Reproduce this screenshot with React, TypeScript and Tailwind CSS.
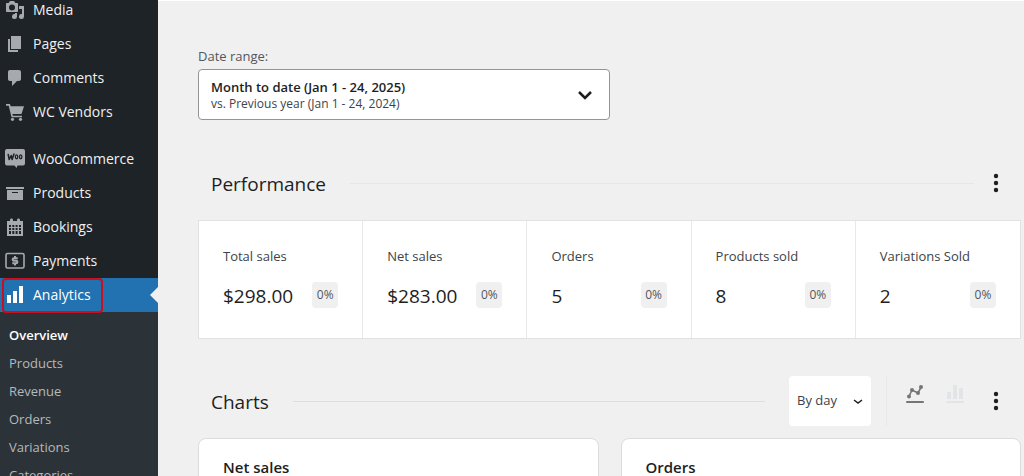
import type { ReactNode } from 'react';

interface MenuItem {
  label: string;
  icon: ReactNode;
  active?: boolean;
}

const contentMenu: MenuItem[] = [
  {
    label: 'Media',
    icon: (
      <path
        fillRule="evenodd"
        d="M13 11V4c0-.55-.45-1-1-1h-1.67L9 1H5L3.67 3H2c-.55 0-1 .45-1 1v7c0 .55.45 1 1 1h10c.55 0 1-.45 1-1zM7 4.5a3 3 0 1 1 0 6 3 3 0 0 1 0-6zm7 1.5h5v10.5a2.500 2.500 0 1 1-2-2.450V9h-3zm-4 8.050V13h2v3.500a2.500 2.500 0 1 1-2-2.450z"
      />
    ),
  },
  {
    label: 'Pages',
    icon: <path d="M6 15V2h10v13H6zm-1 1h8v2H3V5h2v11z" />,
  },
  {
    label: 'Comments',
    icon: <path d="M5 2h9c1.100 0 2 .9 2 2v7c0 1.100-.9 2-2 2h-2l-5 5v-5H5c-1.100 0-2-.9-2-2V4c0-1.100.9-2 2-2z" />,
  },
  {
    label: 'WC Vendors',
    icon: (
      <>
        <path d="M1 2h4l.6 2.200H19l-2.500 7.800H7.400l.5 1.700H17v1.600H6.500L3.700 3.700H1z" />
        <circle cx="7.500" cy="17.300" r="1.600" />
        <circle cx="15.500" cy="17.300" r="1.600" />
      </>
    ),
  },
];

const storeMenu: MenuItem[] = [
  {
    label: 'WooCommerce',
    icon: (
      <>
        <path d="M2 0h16a2 2 0 0 1 2 2v12.500a2 2 0 0 1-2 2h-5.500l-1 2.500-2-2.500H2a2 2 0 0 1-2-2V2a2 2 0 0 1 2-2z" />
        <path
          d="M3.200 5.500l1 5L6.200 6.500l.9 4L9 5"
          fill="none"
          stroke="#1d2327"
          strokeWidth="1.500"
          strokeLinecap="round"
          strokeLinejoin="round"
        />
        <ellipse cx="11.600" cy="7.800" rx="1.200" ry="2" fill="none" stroke="#1d2327" strokeWidth="1.300" />
        <ellipse cx="15.700" cy="7.800" rx="1.200" ry="2" fill="none" stroke="#1d2327" strokeWidth="1.300" />
      </>
    ),
  },
  {
    label: 'Products',
    icon: <path fillRule="evenodd" d="M19 4v2H1V4h18zM2 7h16v10H2V7zm11 3V9H7v1h6z" />,
  },
  {
    label: 'Bookings',
    icon: (
      <path
        fillRule="evenodd"
        d="M15 4h3v15H2V4h3V3c0-.8.600-1.500 1.500-1.500S8 2.200 8 3v1h4V3c0-.8.600-1.500 1.500-1.500S15 2.200 15 3v1zM4 8v2h2V8H4zm3.300 0v2h2V8h-2zm3.300 0v2h2V8h-2zM14 8v2h2V8h-2zM4 11v2h2v-2H4zm3.300 0v2h2v-2h-2zm3.300 0v2h2v-2h-2zm3.400 0v2h2v-2h-2zM4 14v3h2v-3H4zm3.300 0v3h2v-3h-2zm3.300 0v3h2v-3h-2zm3.400 0v3h2v-3h-2z"
      />
    ),
  },
  {
    label: 'Payments',
    icon: (
      <>
        <rect x="1" y="2.500" width="18" height="14.500" rx="1.500" fill="none" stroke="currentColor" strokeWidth="1.600" />
        <path
          d="M12.700 7.200H8.900a1.200 1.200 0 0 0 0 2.500h2.200a1.200 1.200 0 0 1 0 2.600H7.300M10 5v2M10 12.500v2"
          fill="none"
          stroke="currentColor"
          strokeWidth="2"
        />
      </>
    ),
  },
  {
    label: 'Analytics',
    active: true,
    icon: <path d="M2 10h4v8H2zM8 6h4v12H8zM14 1h4v17h-4z" />,
  },
];

const subMenu = ['Overview', 'Products', 'Revenue', 'Orders', 'Variations', 'Categories'];

const stats = [
  { label: 'Total sales', value: '$298.00', delta: '0%' },
  { label: 'Net sales', value: '$283.00', delta: '0%' },
  { label: 'Orders', value: '5', delta: '0%' },
  { label: 'Products sold', value: '8', delta: '0%' },
  { label: 'Variations Sold', value: '2', delta: '0%' },
];

function MenuLink({ item }: { item: MenuItem }) {
  return (
    <li className="relative">
      <a
        href="#"
        className={`flex h-[34px] items-center gap-2 pl-[5px] text-sm ${
          item.active ? 'bg-[#2271b1] text-white' : 'text-[#f0f0f1]'
        }`}
      >
        <svg
          viewBox="0 0 20 20"
          className={`size-5 shrink-0 ${item.active ? 'text-white' : 'text-[#a7aaad]'}`}
          fill="currentColor"
        >
          {item.icon}
        </svg>
        {item.label}
      </a>
      {item.active && (
        <>
          <span className="absolute top-0 left-[2px] h-[35px] w-[101px] rounded border-2 border-[#c9101c]" />
          <span className="absolute top-[9px] right-0 border-y-8 border-r-8 border-y-transparent border-r-[#f0f0f0]" />
        </>
      )}
    </li>
  );
}

function Sidebar() {
  return (
    <nav className="w-[158px] shrink-0 bg-[#1d2327]">
      <ul className="-mt-[7px]">
        {contentMenu.map(item => (
          <MenuLink key={item.label} item={item} />
        ))}
      </ul>
      <ul className="mt-[13px]">
        {storeMenu.map(item => (
          <MenuLink key={item.label} item={item} />
        ))}
      </ul>
      <ul className="bg-[#2c3338] pt-[10px] pb-2 text-[13px]">
        {subMenu.map((label, i) => (
          <li key={label}>
            <a
              href="#"
              className={`flex h-7 items-center pl-[9px] ${i === 0 ? 'font-semibold text-white' : 'text-[#b4b9be]'}`}
            >
              {label}
            </a>
          </li>
        ))}
      </ul>
    </nav>
  );
}

function MoreButton({ label }: { label: string }) {
  return (
    <button type="button" aria-label={label} className="flex h-6 w-6 items-center justify-center text-[#1e1e1e]">
      <svg viewBox="0 0 24 24" className="size-6" fill="currentColor">
        <circle cx="12" cy="5" r="2.200" />
        <circle cx="12" cy="12" r="2.200" />
        <circle cx="12" cy="19" r="2.200" />
      </svg>
    </button>
  );
}

function DateRange() {
  return (
    <div className="w-[412px]">
      <label htmlFor="date-range" className="block text-[13px] leading-5 text-[#50575e]">
        Date range:
      </label>
      <button
        id="date-range"
        type="button"
        className="mt-[3px] flex h-[51px] w-full items-center justify-between rounded border border-[#949494] bg-white pr-3 pl-3 text-left"
      >
        <span>
          <span className="block text-[13px] leading-[18px] font-semibold text-[#1e1e1e]">
            Month to date (Jan 1 - 24, 2025)
          </span>
          <span className="block text-xs leading-4 text-[#3c434a]">vs. Previous year (Jan 1 - 24, 2024)</span>
        </span>
        <svg viewBox="0 0 24 24" className="size-6" fill="none" stroke="#1e1e1e" strokeWidth="2.500">
          <path d="M6 9l6 6 6-6" />
        </svg>
      </button>
    </div>
  );
}

function Performance() {
  return (
    <section>
      <div className="flex h-[50px] items-center px-[13px]">
        <h2 className="pt-[2px] text-[19px] text-[#1e1e1e]">Performance</h2>
        <hr className="mr-[10px] ml-6 grow border-[#e6e6e6]" />
        <MoreButton label="Performance options" />
      </div>
      <ul className="mt-3 grid grid-cols-5 divide-x divide-[#e8e8e8] border border-[#e2e2e2] bg-white">
        {stats.map(s => (
          <li key={s.label} className="px-6 pt-[25px] pb-[30px]">
            <p className="text-[13px] leading-5 whitespace-nowrap text-[#3c434a]">{s.label}</p>
            <div className="mt-4 flex items-center justify-between">
              <span className="pt-[2px] text-[19px] leading-6 text-[#1e1e1e]">{s.value}</span>
              <span className="flex h-[26px] w-[26px] items-center justify-center rounded-sm bg-[#f0f0f0] text-xs text-[#50575e]">
                {s.delta}
              </span>
            </div>
          </li>
        ))}
      </ul>
    </section>
  );
}

function Charts() {
  return (
    <section>
      <div className="flex h-[50px] items-center px-[13px]">
        <h2 className="pt-[2px] text-[19px] text-[#1e1e1e]">Charts</h2>
        <hr className="mx-6 grow border-[#dedede]" />
        <div className="relative">
          <select
            aria-label="Interval"
            className="h-[50px] w-[82px] appearance-none rounded-sm bg-white pl-2 text-[13px] text-[#3c434a]"
          >
            <option>By day</option>
            <option>By week</option>
          </select>
          <svg
            viewBox="0 0 10 10"
            className="pointer-events-none absolute top-5 right-2 size-[10px]"
            fill="none"
            stroke="#1e1e1e"
            strokeWidth="1.500"
          >
            <path d="M1 4l4 3 4-3" />
          </svg>
        </div>
        <div className="ml-[15px] flex h-[50px] gap-5 border-l border-[#e8e8e8] pt-2 pr-[19px] pl-[18px]">
          <button type="button" aria-label="Line chart" className="size-5 text-[#757575]">
            <svg viewBox="0 0 20 20" className="size-5" fill="currentColor">
              <path d="M4 12.500L7 6l6 3 3.500-6.500" fill="none" stroke="currentColor" strokeWidth="1.600" />
              <circle cx="4" cy="12.500" r="2" />
              <circle cx="7" cy="6" r="2" />
              <circle cx="13" cy="9" r="2" />
              <circle cx="16" cy="3" r="2" />
              <rect x="1" y="17" width="18" height="2" rx="1" />
            </svg>
          </button>
          <button type="button" aria-label="Bar chart" className="size-5 text-[#e2e4e7]">
            <svg viewBox="0 0 20 20" className="size-5" fill="currentColor">
              <rect x="2" y="8" width="4" height="7" />
              <rect x="8" y="1" width="4" height="14" />
              <rect x="14" y="4" width="4" height="11" />
              <rect x="1" y="17" width="18" height="2" rx="1" />
            </svg>
          </button>
        </div>
        <MoreButton label="Chart options" />
      </div>
      <div className="mt-3 grid grid-cols-2 gap-[22px]">
        {['Net sales', 'Orders'].map(title => (
          <div key={title} className="h-80 rounded-lg border border-[#dcdcdc] bg-white px-6 pt-4">
            <h3 className="text-[15px] leading-6 font-semibold text-[#1e1e1e]">{title}</h3>
          </div>
        ))}
      </div>
    </section>
  );
}

export default function App() {
  return (
    <div className="flex h-screen overflow-hidden bg-[#f0f0f0] font-['Open_Sans','Noto_Sans',sans-serif]">
      <Sidebar />
      <main className="flex min-w-0 grow flex-col border-t border-white pt-[45px] pr-[3px] pl-10">
        <DateRange />
        <div className="mt-[38px] flex flex-col gap-[37px]">
          <Performance />
          <Charts />
        </div>
      </main>
    </div>
  );
}
